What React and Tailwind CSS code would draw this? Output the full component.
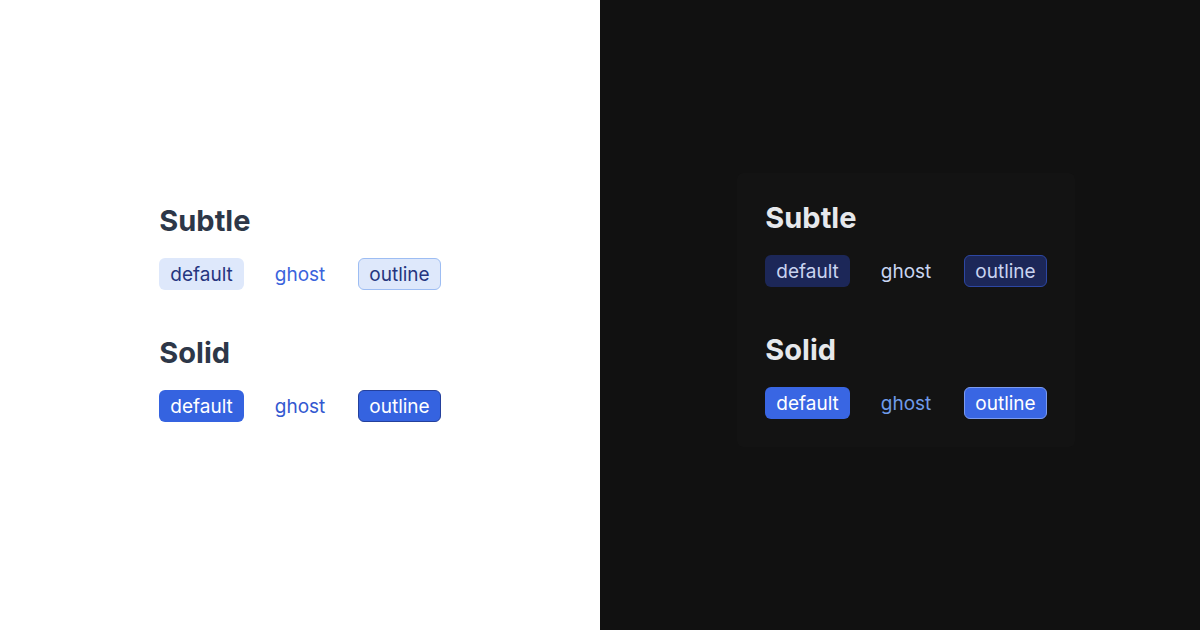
import React from "react";

const variants = {
  light: {
    panel: "bg-white",
    box: "bg-white",
    heading: "text-[#2d3748]",
    subtle: {
      default: "bg-[#dee8fb] text-[#25357f] border-transparent",
      ghost: "bg-transparent text-[#3a63dc] border-transparent",
      outline: "bg-[#dee8fb] text-[#25357f] border-[#9dbdf3]",
    },
    solid: {
      default: "bg-[#3563e0] text-white border-transparent",
      ghost: "bg-transparent text-[#3358d0] border-transparent",
      outline: "bg-[#3563e0] text-white border-[#24409c]",
    },
  },
  dark: {
    panel: "bg-[#111111]",
    box: "bg-[#131313]",
    heading: "text-[#e6e8ec]",
    subtle: {
      default: "bg-[#1c2758] text-[#c9d4f0] border-transparent",
      ghost: "bg-transparent text-[#c9d6f1] border-transparent",
      outline: "bg-[#1c2758] text-[#c9d4f0] border-[#2d47a3]",
    },
    solid: {
      default: "bg-[#3966e3] text-white border-transparent",
      ghost: "bg-transparent text-[#6f9be9] border-transparent",
      outline: "bg-[#3966e3] text-white border-[#7c9bf0]",
    },
  },
};

function Tag({ label, cls }) {
  return (
    <span className={`inline-flex items-center h-8 px-[10px] rounded-md border text-[19px] leading-none ${cls}`}>
      {label}
    </span>
  );
}

function Section({ title, set, headingCls }) {
  return (
    <div>
      <h2 className={`text-[29px] font-bold leading-[34px] ${headingCls}`}>{title}</h2>
      <div className="flex gap-5 mt-[20px]">
        <Tag label="default" cls={set.default} />
        <Tag label="ghost" cls={`pr-3 ${set.ghost}`} />
        <Tag label="outline" cls={set.outline} />
      </div>
    </div>
  );
}

function Panel({ theme, shift }) {
  const t = variants[theme];
  return (
    <div className={`w-[600px] h-[630px] flex items-center justify-center ${t.panel}`}>
      <div className={`${shift}`}>
        <div className={`flex flex-col gap-[46px] p-7 rounded-md ${t.box}`}>
          <Section title="Subtle" set={t.subtle} headingCls={t.heading} />
          <Section title="Solid" set={t.solid} headingCls={t.heading} />
        </div>
      </div>
    </div>
  );
}

export default function App() {
  return (
    <div className="flex w-[1200px] h-[630px] overflow-hidden" style={{ fontFamily: "Inter, 'Noto Sans', sans-serif" }}>
      <Panel theme="light" shift="mb-1" />
      <Panel theme="dark" shift="ml-3 mb-[10px]" />
    </div>
  );
}
